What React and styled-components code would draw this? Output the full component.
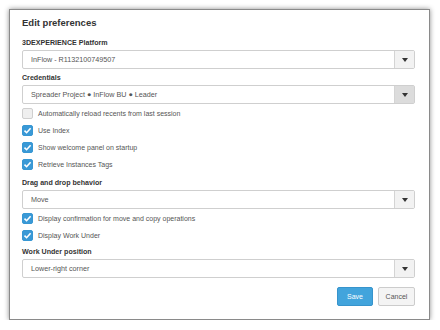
import React, { useState } from 'react';
import styled, { createGlobalStyle } from 'styled-components';

const GlobalStyle = createGlobalStyle`
  body {
    margin: 0;
    background: #fff;
    font-family: 'Liberation Sans', Arial, sans-serif;
  }
`;

const Dialog = styled.div`
  box-sizing: border-box;
  margin: 9px 0 0 9px;
  width: 421px;
  height: 311px;
  padding: 7px 14px 0 12px;
  background: #fff;
  border: 1px solid #8a8a8a;
  box-shadow: 0 0 5px rgba(0, 0, 0, 0.45);
  display: flex;
  flex-direction: column;
`;

const Title = styled.h2`
  margin: 0;
  font-size: 9.5px;
  line-height: 12px;
  font-weight: 600;
  color: #333;
`;

const Label = styled.div`
  margin-top: ${p => p.gap}px;
  font-size: 7.1px;
  line-height: 10px;
  font-weight: bold;
  color: #333;
`;

const Select = styled.div`
  box-sizing: border-box;
  margin-top: 2px;
  height: 19px;
  display: flex;
  align-items: stretch;
  border: 1px solid #cfcfcf;
  border-radius: 2px;
  background: #fff;
`;

const SelectValue = styled.div`
  flex: 1;
  display: flex;
  align-items: center;
  padding-left: 8px;
  font-size: 7.2px;
  color: #555;
`;

const Arrow = styled.div`
  width: 19px;
  border-left: 1px solid #d4d4d4;
  background: ${p => (p.active ? '#dcdcdc' : '#f2f2f2')};
  display: flex;
  align-items: center;
  justify-content: center;

  &::after {
    content: '';
    border-left: 3px solid transparent;
    border-right: 3px solid transparent;
    border-top: 4px solid #333;
  }
`;

const CheckList = styled.div`
  margin-top: 1px;
  display: flex;
  flex-direction: column;
`;

const CheckRow = styled.label`
  height: 17px;
  display: flex;
  align-items: center;
  gap: 5px;
  font-size: 7px;
  color: #555;
  cursor: pointer;
`;

const Box = styled.span`
  box-sizing: border-box;
  width: 11px;
  height: 11px;
  border-radius: 2px;
  border: 1px solid ${p => (p.checked ? '#3797d3' : '#cfcfcf')};
  background: ${p => (p.checked ? '#3a99d6' : '#efefef')};
  display: flex;
  align-items: center;
  justify-content: center;
`;

const Footer = styled.div`
  margin-top: 9px;
  display: flex;
  justify-content: flex-end;
  gap: 5px;
`;

const Button = styled.button`
  box-sizing: border-box;
  height: 19px;
  width: ${p => p.w}px;
  padding: 0;
  border-radius: 2px;
  font-family: inherit;
  font-size: 7px;
  border: 1px solid ${p => (p.primary ? '#3794cc' : '#cccccc')};
  background: ${p => (p.primary ? '#42a4dc' : '#f4f4f4')};
  color: ${p => (p.primary ? '#fff' : '#555')};
`;

const Dropdown = ({ value, active }) => (
  <Select>
    <SelectValue>{value}</SelectValue>
    <Arrow active={active} />
  </Select>
);

const Checkbox = ({ checked, onToggle, children }) => (
  <CheckRow onClick={onToggle}>
    <Box checked={checked}>
      {checked && (
        <svg width="9" height="9" viewBox="0 0 9 9">
          <path d="M1.5 4.6 L3.6 6.7 L7.6 2.2" fill="none" stroke="#fff" strokeWidth="1.6" />
        </svg>
      )}
    </Box>
    {children}
  </CheckRow>
);

const App = () => {
  const [checks, setChecks] = useState({
    reload: false,
    index: true,
    welcome: true,
    tags: true,
    confirm: true,
    workUnder: true
  });

  const toggle = key => () => setChecks({ ...checks, [key]: !checks[key] });

  return (
    <>
      <GlobalStyle />
      <Dialog>
        <Title>Edit preferences</Title>

        <Label gap={9}>3DEXPERIENCE Platform</Label>
        <Dropdown value="InFlow - R1132100749507" />

        <Label gap={4}>Credentials</Label>
        <Dropdown value="Spreader Project ● InFlow BU ● Leader" active />

        <CheckList>
          <Checkbox checked={checks.reload} onToggle={toggle('reload')}>
            Automatically reload recents from last session
          </Checkbox>
          <Checkbox checked={checks.index} onToggle={toggle('index')}>
            Use Index
          </Checkbox>
          <Checkbox checked={checks.welcome} onToggle={toggle('welcome')}>
            Show welcome panel on startup
          </Checkbox>
          <Checkbox checked={checks.tags} onToggle={toggle('tags')}>
            Retrieve Instances Tags
          </Checkbox>
        </CheckList>

        <Label gap={5}>Drag and drop behavior</Label>
        <Dropdown value="Move" />

        <CheckList>
          <Checkbox checked={checks.confirm} onToggle={toggle('confirm')}>
            Display confirmation for move and copy operations
          </Checkbox>
          <Checkbox checked={checks.workUnder} onToggle={toggle('workUnder')}>
            Display Work Under
          </Checkbox>
        </CheckList>

        <Label gap={3}>Work Under position</Label>
        <Dropdown value="Lower-right corner" />

        <Footer>
          <Button primary w={36}>Save</Button>
          <Button w={37}>Cancel</Button>
        </Footer>
      </Dialog>
    </>
  );
};

export default App;
